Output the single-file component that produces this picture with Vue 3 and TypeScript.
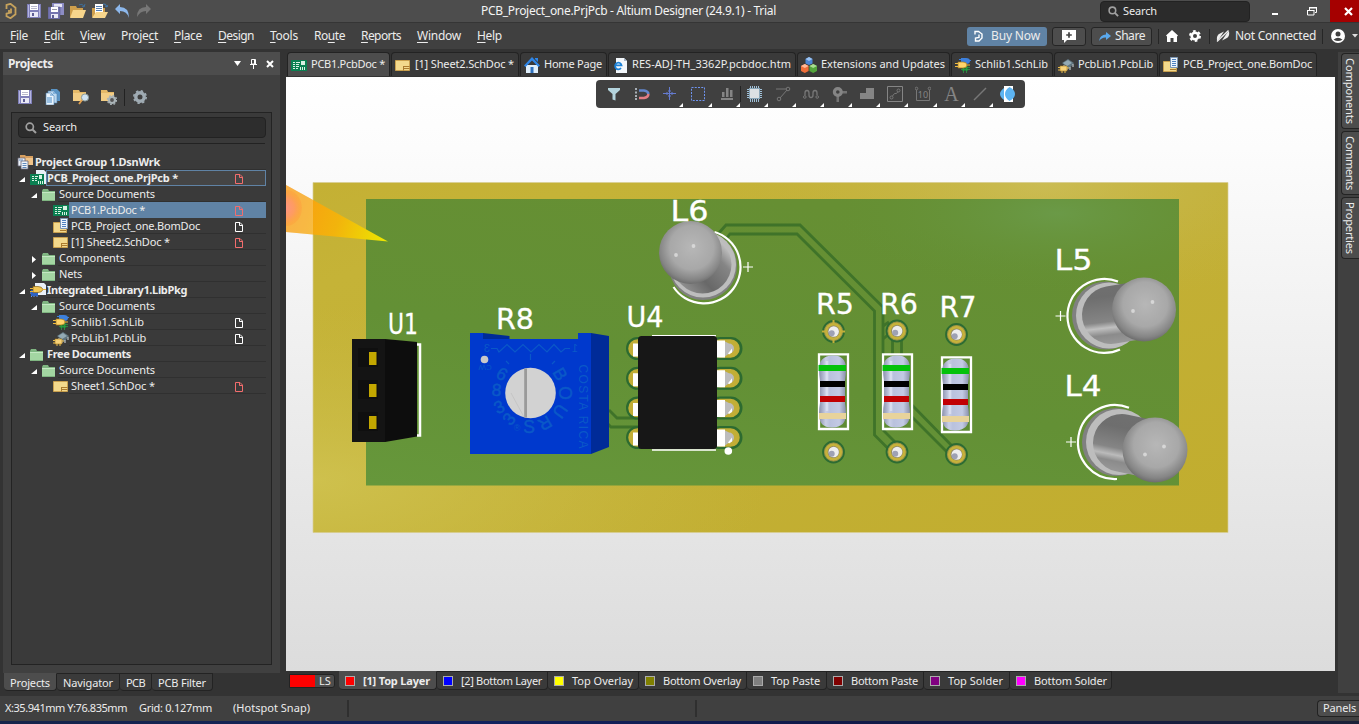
<script setup lang="ts">
import type { Directive } from 'vue'

// Spreads or tightens letter spacing so a label takes a given length in pixels.
const vFit: Directive<HTMLElement, number> = {
  mounted(el, { value }) {
    if (!value) return
    const box = el.getBoundingClientRect()
    const natural = Math.max(box.width, box.height)
    const count = (el.textContent ?? '').trim().length
    el.style.letterSpacing = `${(value - natural) / count}px`
  },
}

interface MenuItem { pre: string; key: string; post: string; w: number }
const menus: MenuItem[] = [
  { pre: '', key: 'F', post: 'ile', w: 18 },
  { pre: '', key: 'E', post: 'dit', w: 20 },
  { pre: '', key: 'V', post: 'iew', w: 25 },
  { pre: 'Proje', key: 'c', post: 't', w: 37 },
  { pre: '', key: 'P', post: 'lace', w: 28 },
  { pre: '', key: 'D', post: 'esign', w: 36 },
  { pre: '', key: 'T', post: 'ools', w: 28 },
  { pre: 'Ro', key: 'u', post: 'te', w: 31 },
  { pre: '', key: 'R', post: 'eports', w: 40 },
  { pre: '', key: 'W', post: 'indow', w: 44 },
  { pre: '', key: 'H', post: 'elp', w: 25 },
]

interface Row {
  label: string; level: number; icon: string; w: number
  open?: boolean; leaf?: boolean; bold?: boolean; mark?: 'red' | 'white'; state?: 'focus' | 'sel'
}
const rows: Row[] = [
  { label: 'Project Group 1.DsnWrk', level: 0, icon: 'group', w: 125, leaf: true, bold: true },
  { label: 'PCB_Project_one.PrjPcb *', level: 1, icon: 'prj', w: 131, open: true, bold: true, mark: 'red', state: 'focus' },
  { label: 'Source Documents', level: 2, icon: 'folder', w: 96, open: true },
  { label: 'PCB1.PcbDoc *', level: 3, icon: 'pcb', w: 74, leaf: true, mark: 'red', state: 'sel' },
  { label: 'PCB_Project_one.BomDoc', level: 3, icon: 'bom', w: 129, leaf: true, mark: 'white' },
  { label: '[1] Sheet2.SchDoc *', level: 3, icon: 'sch', w: 99, leaf: true, mark: 'red' },
  { label: 'Components', level: 2, icon: 'folder', w: 66 },
  { label: 'Nets', level: 2, icon: 'folder', w: 23 },
  { label: 'Integrated_Library1.LibPkg', level: 1, icon: 'libpkg', w: 140, open: true, bold: true },
  { label: 'Source Documents', level: 2, icon: 'folder', w: 96, open: true },
  { label: 'Schlib1.SchLib', level: 3, icon: 'schlib', w: 73, leaf: true, mark: 'white' },
  { label: 'PcbLib1.PcbLib', level: 3, icon: 'pcblib', w: 75, leaf: true, mark: 'white' },
  { label: 'Free Documents', level: 1, icon: 'folder', w: 84, open: true, bold: true },
  { label: 'Source Documents', level: 2, icon: 'folder', w: 96, open: true },
  { label: 'Sheet1.SchDoc *', level: 3, icon: 'sch', w: 84, leaf: true, mark: 'red' },
]

const docTabs = [
  { label: 'PCB1.PcbDoc *', icon: 'pcb', w: 74, tab: 103 },
  { label: '[1] Sheet2.SchDoc *', icon: 'sch', w: 99, tab: 128 },
  { label: 'Home Page', icon: 'home', w: 58, tab: 87 },
  { label: 'RES-ADJ-TH_3362P.pcbdoc.htm', icon: 'ie', w: 159, tab: 188 },
  { label: 'Extensions and Updates', icon: 'ext', w: 124, tab: 153 },
  { label: 'Schlib1.SchLib', icon: 'schlib', w: 73, tab: 102 },
  { label: 'PcbLib1.PcbLib', icon: 'pcblib', w: 75, tab: 104 },
  { label: 'PCB_Project_one.BomDoc', icon: 'bom', w: 129, tab: 158 },
]

const layers = [
  { label: '[1] Top Layer', color: '#ff0000', w: 67, tab: 98 },
  { label: '[2] Bottom Layer', color: '#0000ff', w: 81, tab: 111 },
  { label: 'Top Overlay', color: '#ffff00', w: 61, tab: 91 },
  { label: 'Bottom Overlay', color: '#808000', w: 78, tab: 108 },
  { label: 'Top Paste', color: '#808080', w: 49, tab: 80 },
  { label: 'Bottom Paste', color: '#800000', w: 67, tab: 97 },
  { label: 'Top Solder', color: '#800080', w: 55, tab: 86 },
  { label: 'Bottom Solder', color: '#ff00ff', w: 73, tab: 102 },
]

const panelTabs = [
  { label: 'Projects', w: 40, tab: 53 },
  { label: 'Navigator', w: 50, tab: 63 },
  { label: 'PCB', w: 19, tab: 32 },
  { label: 'PCB Filter', w: 48, tab: 61 },
]
const sideTabs = [
  { label: 'Components', w: 66, h: 76 },
  { label: 'Comments', w: 54, h: 64 },
  { label: 'Properties', w: 52, h: 62 },
]

const tools = ['filter', 'magnet', 'cross', 'select', 'align', 'chip', 'route', 'tune', 'via', 'poly', 'room', 'dim', 'text', 'line', 'view3d']

const pinRows = [348.5, 378.3, 408, 437.6]
const resistors = [{ x: 0, y: 0 }, { x: 64, y: 0 }, { x: 123, y: 3 }]
const pads = [
  { x: 833.5, y: 331.5 }, { x: 833.5, y: 452 }, { x: 897, y: 331 },
  { x: 897, y: 452 }, { x: 956.5, y: 334.5 }, { x: 956.5, y: 454.5 },
]
const designators = [
  { t: 'U1', x: 388, y: 333.5, w: 30 }, { t: 'R8', x: 496, y: 328.5, w: 38 },
  { t: 'U4', x: 626.5, y: 327, w: 37 }, { t: 'L6', x: 670.5, y: 221, w: 38 },
  { t: 'R5', x: 816, y: 313.5, w: 38 }, { t: 'R6', x: 880, y: 313.5, w: 38 },
  { t: 'R7', x: 939.5, y: 316.5, w: 37 }, { t: 'L5', x: 1054.5, y: 270, w: 38 },
  { t: 'L4', x: 1064.5, y: 396, w: 37 },
]
const ringLetters = [
  { t: '6', x: 502, y: 374, r: 30 }, { t: '8', x: 496.5, y: 390, r: 5 },
  { t: '3', x: 499, y: 407, r: -25 }, { t: '3', x: 509, y: 419, r: -50 },
  { t: 'S', x: 529, y: 427, r: 0 }, { t: 'R', x: 545, y: 423, r: 150 },
  { t: 'U', x: 560, y: 411, r: 125 }, { t: 'O', x: 564.5, y: 393, r: 90 },
  { t: 'B', x: 560, y: 374, r: 60 },
]
const leds = [
  { id: 'a', ring: 'M714.500 232A36.500 36.500 0 1 1 673.500 287', fx: 703, fy: 266, dx: 690.5, dy: 252.5, bx: 702.5, by: 264.5, r: 31.5, px: 748, py: 267, h: [[676, 255], [693.5, 246]] },
  { id: 'b', ring: 'M1118 281.500A37 37 0 1 0 1120 349.500', fx: 1106, fy: 315.5, dx: 1144, dy: 309.5, bx: 1111, by: 315, r: 32, px: 1060.5, py: 316, h: [[1133, 311], [1152.5, 302]] },
  { id: 'c', ring: 'M1129 407.800A37 37 0 1 0 1117 479', fx: 1116, fy: 442, dx: 1155, dy: 450, bx: 1122, by: 443, r: 32.5, px: 1071, py: 442, h: [[1145, 454.5], [1164, 446.5]] },
]
</script>

<template>
  <div class="app">
    <svg class="defs" width="0" height="0">
      <symbol id="i-save" viewBox="0 0 16 16"><path d="M1 1h14v14H1z" fill="#7f7fb8"/><path d="M2 2h1v12H2zM13 2h1v12h-1z" fill="#b5b5e0"/><path d="M4 1h8v6H4z" fill="#fff"/><path d="M5 3h6v1H5zM5 5h6v1H5z" fill="#b9b9cc"/><path d="M4 9h8v5H4z" fill="#e9e9f5"/><path d="M6 10h2v3H6z" fill="#5d5d94"/></symbol>
      <symbol id="i-saveall" viewBox="0 0 16 16"><path d="M4 0h12v12H4z" fill="#8c8cc4"/><path d="M6 1h8v3H6z" fill="#e4e4f4"/><path d="M0 4h12v12H0z" fill="#7474b0" stroke="#4c4c7c" stroke-width=".5"/><path d="M3 4h7v5H3z" fill="#fff"/><path d="M4 6h5v1H4z" fill="#99a"/><path d="M3 11h7v4H3z" fill="#e9e9f5"/><path d="M4 12h2v3H4z" fill="#5d5d94"/></symbol>
      <symbol id="i-open" viewBox="0 0 16 16"><path d="M0 3h6l1 2h6v9H0z" fill="#cf9f4c"/><path d="M3 7h13l-3 8H0z" fill="#f8d68c"/><path d="M9 2q4-2 5 2M12 3l2 1 1-3" fill="none" stroke="#3f6e99"/></symbol>
      <symbol id="i-opendoc" viewBox="0 0 16 16"><path d="M0 5h13v9H0z" fill="#cf9f4c"/><path d="M3 1h8v10H3z" fill="#fff"/><path d="M4 3.500h6M4 5.500h6M4 7.500h6" stroke="#5780b4"/><path d="M4 9h12l-3 6H0z" fill="#f8d68c"/><path d="M11 1q3-1 4 3M13 3l2 1 1-2" fill="none" stroke="#3f79b0"/></symbol>
      <symbol id="i-undo" viewBox="0 0 16 16"><path d="M1 6l5-5v3q9 0 9 11Q13 8 6 8v3z" fill="#8db8ec"/></symbol>
      <symbol id="i-redo" viewBox="0 0 16 16"><path d="M15 6l-5-5v3Q1 4 1 14q3-6 9-6v3z" fill="#777"/></symbol>
      <symbol id="i-logo" viewBox="0 0 12 16"><path d="M1.500 6V2l4-1.200 5 4v6.400l-5 4-4-2V10M1.500 10.500l4.500-1V5.500M4 7v3" fill="none" stroke="#c6a25c" stroke-width="1.800"/></symbol>
      <symbol id="i-copy" viewBox="0 0 16 16"><path d="M6 0h6l3 3v9H6z" fill="#5a94c4"/><path d="M3 2h6l3 3v9H3z" fill="#bcd8ef" stroke="#4a80b0" stroke-width=".6"/><path d="M1 4h5l3 3v9H1z" fill="#eaf4fc" stroke="#4a80b0" stroke-width=".6"/><path d="M2 9h5M2 11h5M2 13h5M5 6h3M8 4h3" stroke="#4a8cc8"/></symbol>
      <symbol id="i-fsearch" viewBox="0 0 16 16"><path d="M0 1h6l1 2h6v9H0z" fill="#e5b968"/><path d="M0 4h13v8H0z" fill="#f2cd85"/><circle cx="12" cy="8.500" r="3.600" fill="#cfe3f2" stroke="#899"/><path d="M9 11l-3 4" stroke="#e0a050" stroke-width="1.800"/></symbol>
      <symbol id="i-fgear" viewBox="0 0 16 16"><path d="M0 1h6l1 2h6v9H0z" fill="#e5b968"/><path d="M0 4h13v8H0z" fill="#f2cd85"/><circle cx="11" cy="11" r="3" fill="#555" stroke="#aab4b8" stroke-width="2.200"/><circle cx="11" cy="11" r="4.600" fill="none" stroke="#aab4b8" stroke-width="1.200" stroke-dasharray="1.800 1.800"/></symbol>
      <symbol id="i-gear" viewBox="0 0 16 16"><circle cx="8" cy="8" r="4.200" fill="none" stroke="#9fabb3" stroke-width="3.400"/><circle cx="8" cy="8" r="6.200" fill="none" stroke="#9fabb3" stroke-width="1.600" stroke-dasharray="2.400 2.470"/></symbol>
      <symbol id="i-search" viewBox="0 0 12 12"><circle cx="4.800" cy="4.800" r="3.600" fill="none" stroke="#a0a0a0" stroke-width="1.700"/><path d="M7.500 7.500l3.500 3.500" stroke="#a0a0a0" stroke-width="2"/></symbol>

      <symbol id="i-group" viewBox="0 0 16 16"><path d="M3 1h5l1 1h7v9H3z" fill="#d79f5f"/><path d="M4 4h12v7H4z" fill="#f0c48a"/><path d="M1 4h7v8H1z" fill="#eef4fb" stroke="#667" stroke-width=".8"/><path d="M4 7h7v8H4z" fill="#eef4fb" stroke="#667" stroke-width=".8"/><path d="M5.500 9.500h4M5.500 11.500h4M5.500 13.500h4M2 6h4" stroke="#5f89bb"/></symbol>
      <symbol id="i-pcb" viewBox="0 0 16 16"><path d="M0 3h16v11H0z" fill="#0b8052"/><path d="M2 5.500h2M2 7.500h2M2 9.500h2M2 11.500h2M5 5.500h4M5 7.500h3M5 9.500h3M5 11.500h2" stroke="#d9f2e4"/><path d="M10 4h4v4h-4z" fill="#d9f2e4"/><path d="M9.500 10v3M11.500 10v3M13.500 10v3" stroke="#d9f2e4"/></symbol>
      <symbol id="i-prj" viewBox="0 0 16 16"><path d="M6 0h8l2 2v12H6z" fill="#e9f0f8"/><path d="M0 4h14v11H0z" fill="#0b8052"/><path d="M2 6.500h2M2 8.500h2M2 10.500h2M5 6.500h3M5 8.500h2M5 10.500h2" stroke="#d9f2e4"/><path d="M9 5h3v4H9z" fill="#d9f2e4"/><path d="M8.500 11v3M10.500 11v3M12.500 11v3" stroke="#d9f2e4"/></symbol>
      <symbol id="i-folder" viewBox="0 0 16 16"><path d="M0 5l1-2h5l1 2h6v10H0z" fill="#7fb581"/><path d="M0 6h13v8H0z" fill="#a3d6a2"/><path d="M0 6h13v1H0z" fill="#c4e8c3"/></symbol>
      <symbol id="i-sch" viewBox="0 0 16 16"><path d="M.5 3.500h14v10H.5z" fill="#f3d98c" stroke="#c9a04e"/><path d="M8.500 9.500h6M8.500 11.500h6M8.500 9v4.500" stroke="#ab7b2e"/></symbol>
      <symbol id="i-bom" viewBox="0 0 16 16"><path d="M.5 4.500h13v10H.5z" fill="#f3d98c" stroke="#c9a04e"/><path d="M7.500.5h7v10h-7z" fill="#edf5fc" stroke="#7c96b4"/><path d="M9 2.500h4M9 4.500h4M9 6.500h4M9 8.500h4" stroke="#4f82c0"/><path d="M7 12.500h6" stroke="#ab7b2e"/></symbol>
      <symbol id="i-libpkg" viewBox="0 0 16 16"><path d="M5 1h9l2 2v10H5z" fill="#e9f0f8"/><path d="M1 8h7v6H1z" fill="#2d63c4"/><path d="M1 15l1-1M4 15v-1M7 15v-1M0 11h1" stroke="#6f9df0"/><path d="M3 4.500h5q4 0 5 3-1 3-5 3H3z" fill="#f2c654" stroke="#8a6414" stroke-width=".7"/><path d="M0 6.500h3M0 9.500h3M13 7.500h3" stroke="#e9b53b"/></symbol>
      <symbol id="i-schlib" viewBox="0 0 16 16"><path d="M6 1h5q4 0 4 3t-4 3H6z" fill="#3d80dc"/><path d="M4 2.500h3M14 3.500h2" stroke="#3d80dc"/><path d="M7 9h6v5H7z" fill="#1b7a34"/><path d="M6 10.500h9M6 12.500h9M8.500 8v8M11.500 8v8" stroke="#2e9a45" stroke-width=".8"/><path d="M3 5h5q4 0 4 3t-4 3H3z" fill="#ffd56a" stroke="#a87818" stroke-width=".7"/><path d="M0 6.500h3M0 9.500h3M12 8h3" stroke="#f0bb3e"/></symbol>
      <symbol id="i-pcblib" viewBox="0 0 16 16"><path d="M4 6l6-4 6 4-5 6z" fill="#60747e"/><path d="M5 6l5-3 4 3-5 3z" fill="#93a9b4"/><path d="M6 8v3M9 10v3M12 10v3M15 7v3" stroke="#d5dee2"/><path d="M2 9h7v5H2z" fill="#f7d27a" stroke="#a87818" stroke-width=".6"/><path d="M0 10.500h2M0 13h2M4 14v2M7 14v2M9 11h2" stroke="#e8bb4b"/></symbol>
      <symbol id="i-home" viewBox="0 0 16 16"><path d="M2 8h12v8H2z" fill="#dfeffc"/><path d="M0 8.500L8 0l8 8.500-1.500 1.500L8 3.500 1.500 10z" fill="#2e86e8"/><path d="M11 1h3v4l-3-3z" fill="#2e86e8"/><path d="M6.500 10h3v6h-3z" fill="#2f72c0"/></symbol>
      <symbol id="i-ie" viewBox="0 0 16 16"><path d="M4 1h8l3 3v12H4z" fill="#f3f7fb"/><path d="M12 1l3 3h-3z" fill="#a5b7ca"/><path d="M9 11a3.300 3.300 0 1 1 .6-2.600H4" fill="none" stroke="#1c82d8" stroke-width="1.700"/></symbol>
      <symbol id="i-ext" viewBox="0 0 16 16"><path d="M4.500 2L8 0l3.500 2v4.500L8 8 4.500 6.500z" fill="#4b86d4"/><path d="M4.500 2L8 4l3.500-2L8 0z" fill="#9cc4f2"/><path d="M0 9l3.800-2L7.600 9v5l-3.800 2L0 14z" fill="#ef6f3a"/><path d="M0 9l3.800 2L7.600 9 3.800 7z" fill="#ffb998"/><path d="M8.400 9l3.800-2L16 9v5l-3.800 2-3.800-2z" fill="#53a53c"/><path d="M8.400 9l3.800 2L16 9l-3.800-2z" fill="#a9dd92"/></symbol>

      <symbol id="t-filter" viewBox="0 0 16 16"><path d="M2 2h12v2l-4.500 4v6.500l-3-1V8L2 4z" fill="#b4d4de"/></symbol>
      <symbol id="t-magnet" viewBox="0 0 16 16"><path d="M1 2h2v2H1zM1 5.500h2v2H1zM1 9h2v2H1zM1 12h2v2H1z" fill="#a7aeb4"/><path d="M5 4.500h5q4 .5 4.500 3.500" fill="none" stroke="#6286cc" stroke-width="2.500"/><path d="M5 12h5q4-.5 4.500-4" fill="none" stroke="#e27d83" stroke-width="2.500"/></symbol>
      <symbol id="t-cross" viewBox="0 0 16 16"><path d="M1 7.500h13M7.500 1v13M5 6v3M10 6v3M6 5h3M6 10h3" stroke="#647bd0"/></symbol>
      <symbol id="t-select" viewBox="0 0 16 16"><path d="M1.500 1.500h13v13h-13z" fill="none" stroke="#6f94f0" stroke-dasharray="2 1.250"/></symbol>
      <symbol id="t-align" viewBox="0 0 16 16"><path d="M2 13h12" stroke="#858585" stroke-width="2"/><path d="M3 6h2.500v5H3zM7 2h2.500v9H7zM11 4h2.500v7H11z" fill="#858585"/></symbol>
      <symbol id="t-chip" viewBox="0 0 16 16"><path d="M3.500 0v16M5.500 0v16M7.500 0v16M9.500 0v16M11.500 0v16M0 3.500h15M0 5.500h15M0 7.500h15M0 9.500h15M0 11.500h15" stroke="#9fc0d8"/><path d="M2 2h11v11H2z" fill="#8aa6b8"/><path d="M3 3h9v9H3z" fill="#dce1e4"/></symbol>
      <symbol id="t-route" viewBox="0 0 16 16"><path d="M1 3h10M12 4l-7 8" stroke="#777"/><circle cx="13" cy="3" r="1.800" fill="none" stroke="#777"/><circle cx="4" cy="13" r="1.800" fill="none" stroke="#777"/></symbol>
      <symbol id="t-tune" viewBox="0 0 16 16"><circle cx="1.800" cy="11" r="1.300" fill="none" stroke="#777"/><path d="M2 9.500V7q0-2.500 2-2.500T6 7v2q0 2.500 2 2.500T10 9V7q0-2.500 2-2.500T14 7v2" fill="none" stroke="#777" stroke-width="1.300"/><circle cx="14.200" cy="11" r="1.300" fill="none" stroke="#777"/></symbol>
      <symbol id="t-via" viewBox="0 0 16 16"><path d="M9 5h7v2.500H9zM5.500 9H8v7H5.500z" fill="#747474"/><circle cx="6.800" cy="6" r="3.400" fill="#404040" stroke="#858585" stroke-width="3.200"/></symbol>
      <symbol id="t-poly" viewBox="0 0 16 16"><path d="M1 7h6V2h8v11H1z" fill="#858585"/></symbol>
      <symbol id="t-room" viewBox="0 0 16 16"><path d="M.5.5h15v15H.5z" fill="none" stroke="#858585"/><circle cx="4.500" cy="11.500" r="1.500" fill="none" stroke="#777"/><circle cx="11.500" cy="4.500" r="1.500" fill="none" stroke="#777"/><path d="M5.500 10l2-2.500h2l1.500-2" fill="none" stroke="#777"/></symbol>
      <symbol id="t-dim" viewBox="0 0 16 16"><path d="M1.500 4v10.500h13V4" fill="none" stroke="#777"/><circle cx="1.500" cy="2.500" r="1.300" fill="none" stroke="#777"/><circle cx="14.500" cy="2.500" r="1.300" fill="none" stroke="#777"/></symbol>
      <symbol id="t-line" viewBox="0 0 16 16"><path d="M2 14L14 2" stroke="#777" stroke-width="1.500"/></symbol>
      <symbol id="t-view3d" viewBox="0 0 16 16"><path d="M4 0h9v16H4z" fill="#fff"/><path d="M4 2v12Q0 11 0 8t4-6M9.500 1Q15 4 15 8t-5.500 7Q5 12 5 8t4.500-7" fill="#5db4f2"/></symbol>
    </svg>

    <header class="titlebar">
      <svg class="logo" width="12" height="16"><use href="#i-logo"/></svg>
      <svg v-for="n in ['save', 'saveall', 'open', 'opendoc', 'undo', 'redo']" :key="n" class="qa" width="16" height="16"><use :href="`#i-${n}`"/></svg>
      <div class="title"><span v-fit="295">PCB_Project_one.PrjPcb - Altium Designer (24.9.1) - Trial</span></div>
      <div class="tsearch"><svg width="11" height="11"><use href="#i-search"/></svg><span v-fit="34">Search</span></div>
      <div class="winbtns">
        <span class="min"></span>
        <svg class="restore" width="10" height="9" viewBox="0 0 10 9"><path d="M2.500 3V.5h7v5H8M.5 3.500h6.500V8H.5z" fill="none" stroke="#fff"/><path d="M0 3h7.500v1H0zM2 0h8v1.500H2z" fill="#fff"/></svg>
        <div class="close"><svg width="9" height="9" viewBox="0 0 9 9"><path d="M1 1l7 7M8 1l-7 7" stroke="#fff" stroke-width="2.200"/></svg></div>
      </div>
    </header>

    <nav class="menubar">
      <span v-for="m in menus" :key="m.key + m.post" v-fit="m.w" class="menu">{{ m.pre }}<u>{{ m.key }}</u>{{ m.post }}</span>
      <div class="actions">
        <div class="buy"><svg width="9" height="12" viewBox="0 0 9 12"><path d="M1 4.500V1.500h3.500L8 4v4L5 11H1.500V8L5 7.500V4.500" fill="none" stroke="#fff" stroke-width="1.400"/></svg><span v-fit="49">Buy Now</span></div>
        <div class="btn note"><svg width="16" height="13" viewBox="0 0 16 13"><path d="M1 0h14v10H6l-3 3v-3H1z" fill="#fff"/><path d="M8 2.200v5.600M5.200 5h5.600" stroke="#444" stroke-width="1.700"/></svg></div>
        <div class="btn share"><svg width="12" height="9" viewBox="0 0 12 9"><path d="M7 0l5 4-5 4V5.500Q3 5 0 9q1-6.500 7-6.500z" fill="#5aa9ee"/></svg><span v-fit="30">Share</span></div>
        <i class="vsep"></i>
        <svg class="house" width="12" height="12" viewBox="0 0 12 12"><path d="M6 0l6 5.500-1 1V12H7.500V8h-3v4H1V6.500l-1-1z" fill="#fff"/></svg>
        <svg class="cog" width="12" height="12" viewBox="0 0 12 12"><circle cx="6" cy="6" r="3.300" fill="none" stroke="#fff" stroke-width="2.600"/><circle cx="6" cy="6" r="5" fill="none" stroke="#fff" stroke-width="2" stroke-dasharray="2.600 2.640"/></svg>
        <i class="vsep"></i>
        <svg class="plug" width="14" height="12" viewBox="0 0 14 12"><path d="M1 11Q0 5 4 3.500L8 1.500 3 9zM13 1q1 6-3 7.500L6 10.500 11 3z" fill="#eee"/><path d="M1 11.500L12.500.5" stroke="#eee" stroke-width="1.300"/></svg>
        <span v-fit="81" class="nc">Not Connected</span>
        <i class="vsep"></i>
        <svg class="user" width="14" height="14" viewBox="0 0 14 14"><circle cx="7" cy="7" r="7" fill="#fff"/><circle cx="7" cy="5" r="2.500" fill="#404040"/><path d="M2.500 10.800Q7 6.500 11.500 10.800 9 12 7 12T2.500 10.800" fill="#404040"/></svg>
        <svg class="caret" width="7" height="4" viewBox="0 0 7 4"><path d="M1 0h6L4 3.500z" fill="#ddd"/></svg>
      </div>
    </nav>

    <main class="work">
      <aside class="left">
        <div class="phead">
          <span v-fit="45" class="pname">Projects</span>
          <svg width="7" height="5" viewBox="0 0 7 5"><path d="M0 0h7L3.500 5z" fill="#fff"/></svg>
          <svg width="7" height="10" viewBox="0 0 7 10"><path d="M1.500.5h4V5h-4zM4.500 0v5M0 5.500h7M3.500 6v4" fill="none" stroke="#fff"/></svg>
          <svg width="8" height="8" viewBox="0 0 8 8"><path d="M1 1l6 6M7 1L1 7" stroke="#fff" stroke-width="2"/></svg>
        </div>
        <div class="pbody">
          <div class="ptools">
            <svg v-for="n in ['save', 'copy', 'fsearch', 'fgear']" :key="n" width="16" height="16"><use :href="`#i-${n}`"/></svg>
            <i></i>
            <svg width="16" height="16"><use href="#i-gear"/></svg>
          </div>
          <div class="treebox">
            <div class="psearch"><svg width="12" height="12"><use href="#i-search"/></svg><span v-fit="34">Search</span></div>
            <hr>
            <div class="tree">
              <div v-for="(r, i) in rows" :key="i" class="row" :class="[`lv${r.level}`, r.state, { bold: r.bold }]">
                <svg class="tw" width="6" height="7" viewBox="0 0 6 7"><path v-if="r.open" d="M6 1v5H0z" fill="#fff"/><path v-else-if="!r.leaf" d="M1 0l4 3.500L1 7z" fill="#fff"/></svg>
                <svg class="ico" width="16" height="16"><use :href="`#i-${r.icon}`"/></svg>
                <div class="cell">
                  <span v-fit="r.w">{{ r.label }}</span>
                  <svg v-if="r.mark" class="mark" :class="r.mark" width="8" height="10" viewBox="0 0 8 10"><path d="M.5.5H5L7.500 3v6.500h-7zM4.500.5v3h3" fill="none" stroke="currentColor"/></svg>
                </div>
              </div>
            </div>
          </div>
        </div>
        <div class="ptabs"><div v-for="(t, i) in panelTabs" :key="t.label" class="ptab" :class="{ on: i === 0 }" :style="{ width: t.tab + 'px' }"><span v-fit="t.w">{{ t.label }}</span></div></div>
      </aside>

      <section class="center">
        <div class="dtabs">
          <div v-for="(t, i) in docTabs" :key="t.label" class="dtab" :class="{ on: i === 0 }" :style="{ width: t.tab + 'px' }">
            <svg width="16" height="16"><use :href="`#i-${t.icon}`"/></svg><span v-fit="t.w">{{ t.label }}</span>
          </div>
        </div>
        <div class="canvas">
          <svg class="board" width="1049" height="594" viewBox="286 77 1049 594">
            <defs>
              <linearGradient id="gold" x1="0" y1="0" x2="1" y2="1"><stop offset="0" stop-color="#c4b034"/><stop offset=".15" stop-color="#c5b337"/><stop offset=".5" stop-color="#c3b036"/><stop offset="1" stop-color="#c1ad2e"/></linearGradient>
              <radialGradient id="goldl" cx="0" cy=".85" r=".5"><stop offset="0" stop-color="#d2c655" stop-opacity=".75"/><stop offset="1" stop-color="#cbbd45" stop-opacity="0"/></radialGradient>
              <radialGradient id="goldr" cx=".8" cy="0" r=".35"><stop offset="0" stop-color="#d0c56b" stop-opacity=".55"/><stop offset="1" stop-color="#c4b54a" stop-opacity="0"/></radialGradient>
              <radialGradient id="greenl" cx=".85" cy=".05" r=".28"><stop offset="0" stop-color="#6c9d4e" stop-opacity=".75"/><stop offset="1" stop-color="#649133" stop-opacity="0"/></radialGradient>
              <linearGradient id="green" x1="0" y1="1" x2=".5" y2="0"><stop offset="0" stop-color="#66973b"/><stop offset=".5" stop-color="#639035"/><stop offset="1" stop-color="#668f33"/></linearGradient>
              <linearGradient id="flare" gradientUnits="userSpaceOnUse" x1="286" y1="210" x2="388" y2="241"><stop offset="0" stop-color="#f99b12"/><stop offset=".5" stop-color="#f2b40c"/><stop offset="1" stop-color="#ece800"/></linearGradient>
              <radialGradient id="glow" gradientUnits="userSpaceOnUse" cx="284" cy="208" r="17"><stop offset="0" stop-color="#ff9488"/><stop offset=".6" stop-color="#ff9668" stop-opacity=".8"/><stop offset="1" stop-color="#ff9a3c" stop-opacity=".4"/></radialGradient>
              <radialGradient id="dome" cx=".52" cy=".42" r=".58"><stop offset="0" stop-color="#b7b7b7"/><stop offset=".6" stop-color="#a8a8a8"/><stop offset=".88" stop-color="#858585"/><stop offset="1" stop-color="#6d6d6d"/></radialGradient>
              <linearGradient id="cyl-a" gradientUnits="userSpaceOnUse" x1="673" y1="285" x2="727" y2="235"><stop offset="0" stop-color="#9a9a9a"/><stop offset=".35" stop-color="#686868"/><stop offset=".7" stop-color="#858585"/><stop offset=".88" stop-color="#c0c0c0"/><stop offset="1" stop-color="#888"/></linearGradient>
              <linearGradient id="cyl-b" gradientUnits="userSpaceOnUse" x1="1108" y1="284" x2="1115" y2="344"><stop offset="0" stop-color="#707070"/><stop offset=".2" stop-color="#6e6e6e"/><stop offset=".62" stop-color="#858585"/><stop offset=".72" stop-color="#c0c0c0"/><stop offset=".84" stop-color="#8b8b8b"/><stop offset="1" stop-color="#999"/></linearGradient>
              <linearGradient id="cyl-c" gradientUnits="userSpaceOnUse" x1="1126" y1="413" x2="1114" y2="472"><stop offset="0" stop-color="#707070"/><stop offset=".25" stop-color="#6e6e6e"/><stop offset=".6" stop-color="#858585"/><stop offset=".72" stop-color="#bbb"/><stop offset=".82" stop-color="#8b8b8b"/><stop offset="1" stop-color="#999"/></linearGradient>
              <linearGradient id="res" x1="0" y1="0" x2="1" y2="0"><stop offset="0" stop-color="#8a90ab"/><stop offset=".25" stop-color="#c9cfe6"/><stop offset=".4" stop-color="#b9c1dd"/><stop offset=".75" stop-color="#c3cae4"/><stop offset="1" stop-color="#8a90ab"/></linearGradient>
            </defs>
            <path d="M313 182.500h915v350H313z" fill="url(#gold)"/>
            <path d="M313 182.500h915v350H313z" fill="url(#goldl)"/>
            <path d="M313 182.500h915v350H313z" fill="url(#goldr)"/>
            <path d="M366 199h813v286.500H366z" fill="url(#green)"/>
            <path d="M366 199h813v286.500H366z" fill="url(#greenl)"/>
            <path d="M313 182.500h915v350H313z" fill="none" stroke="#d8cf95" stroke-width=".7"/>
            <path d="M286 185l102 56.500L286 232z" fill="url(#flare)"/>
            <path d="M286 185l27 15v34.500l-27-2.500z" fill="#fff" opacity=".22"/>
            <path d="M286 190a15 17 0 0 1 0 36z" fill="url(#glow)"/>

            <g fill="none" stroke="#3f7329" stroke-width="2.800">
              <path d="M718 234l8-9h74l83 82v123l15 15"/>
              <path d="M726 239l4-5h67l77.500 77v124l15 15"/>
              <path d="M892.500 340v16M901.500 340v16M883 326l6-4M883 339l6-5M911 404l44 45M911 416l36 36"/>
              <path d="M609 410l8 8h22M607 423l4 4h28"/>
            </g>

            <g>
              <path d="M417 344.500h3v91h-3" fill="none" stroke="#fff" stroke-width="2.500"/>
              <path d="M352 339h33v103h-33z" fill="#141414"/>
              <path d="M385 339l32 3v94.500l-32 5.500z" fill="#0d0d0d"/>
              <g v-for="y in [0, 32, 64]" :key="y"><path :transform="`translate(0 ${y})`" d="M358 348h20v19h-20z" fill="#0f0f0f"/><path :transform="`translate(0 ${y})`" d="M369 352h7.500v13H369z" fill="#c3a700"/></g>
            </g>

            <g>
              <path d="M470 333h13v6h95v-6h13v121H470z" fill="#0039cd"/>
              <path d="M483 333l26.500 3v3H483zM591 333l18 3v111l-18 7z" fill="#002b98"/>
              <g fill="none" stroke="#0a58c8" stroke-width="1.200"><path d="M491 348.500h6l2 3.500 8-7.500 8 7.500 8-7.500 8 7.500 8-7.500 8 7.500 7-7.500 7 7.500 4-3.500h5M530.500 354v6M506 361l3 3M555 361l-3 3"/></g>
              <g class="molded">
                <text transform="translate(486 352) scale(-1 1)" x="-4" font-size="11">3</text>
                <text transform="translate(574 352) scale(-1 1)" x="-4" font-size="11">1</text>
                <text transform="translate(485 368) rotate(180)" text-anchor="middle" y="3" font-size="8">CW</text>
                <text v-for="(l, i) in ringLetters" :key="i" class="ringtext" :transform="`translate(${l.x} ${l.y}) rotate(${l.r})`" y="6" text-anchor="middle" font-size="17.500">{{ l.t }}</text>
                <text x="517" y="431" text-anchor="middle" font-size="9">®</text>
                <text transform="translate(579 364.500) rotate(90)" font-size="12" textLength="84">COSTA RICA</text>
              </g>
              <circle cx="530.500" cy="393" r="25.300" fill="#d2d2d2"/>
              <path d="M524.200 368.500h2.800v49h-2.800z" fill="#9a9a9a"/><path d="M511 393l13 24" stroke="#bcbcbc" stroke-width=".6"/>
              <circle cx="484.500" cy="359.500" r="3.800" fill="#c9c9c9"/>
            </g>

            <g>
              <g v-for="y in pinRows" :key="y">
                <path :d="`M640 ${y}H637.500M720 ${y}H731`" stroke="#2d6b30" stroke-width="23" stroke-linecap="round"/>
                <path :d="`M640 ${y}H637.500M720 ${y}H730.500`" stroke="#c2ae36" stroke-width="18.500" stroke-linecap="round"/>
                <path :d="`M633 ${y - 5}h5v13h-5zM717 ${y - 8}h8v17h-8z`" fill="#fff"/>
                <path :d="`M725 ${y - 7}l4 2a5 5 0 0 1 0 10l-4 3z`" fill="#bcbcbc"/>
                <path :d="`M728 ${y + 5}l4-5v4l-3 2z`" fill="#fff"/>
              </g>
              <path d="M652 335.700h64M652 450h64" stroke="#fff" stroke-width="1.500"/>
              <rect x="638" y="336" width="79" height="113" rx="3.500" fill="#171717"/>
              <circle cx="728.300" cy="451" r="3.800" fill="#fff"/>
            </g>

            <g v-for="p in pads" :key="`${p.x}-${p.y}`" :transform="`translate(${p.x} ${p.y})`">
              <circle r="10.500" fill="#6b8f3a" stroke="#2d6b33" stroke-width="1.800"/>
              <circle r="9" fill="#c6b23a" stroke="#a08d4c" stroke-width=".7"/>
              <circle r="5.900" fill="#8e8768"/><circle cx=".2" r="5.200" fill="#eee"/><circle cx="-1.800" cy="1.800" r="3" fill="#9ea1b4"/>
            </g>
            <path d="M822 331.500h4M841 331.500h4M833.500 320v4M833.500 339v4" stroke="#c3b03a" stroke-width="2"/>

            <g v-for="r in resistors" :key="r.x" :transform="`translate(${r.x} ${r.y})`">
              <path d="M819 354.300h29v74.700h-29z" fill="#5f8c34" stroke="#fff" stroke-width="2.300"/>
              <path d="M819 369q0-13 13.500-13.500T846 369q0 5-1 12v22q1 5 1 11 0 13-13.500 13.500T819 414q0-6 1-11v-22q-1-7-1-12z" fill="url(#res)"/>
              <path d="M827 361v50" stroke="#e1e5f4" stroke-width="2.500" opacity=".7"/>
              <path d="M818.500 365h27.500v6h-27.500z" fill="#04c20b"/><path d="M820 381h25v6h-25z" fill="#000"/><path d="M820 396h25v6h-25z" fill="#c10003"/><path d="M819 413h27v6h-27z" fill="#e8d39b"/>
            </g>

            <g v-for="l in leds" :key="l.id">
              <path :d="l.ring" fill="none" stroke="#fff" stroke-width="2.200"/>
              <circle :cx="l.fx" :cy="l.fy" r="34" fill="#808080"/>
              <circle :cx="l.fx + (l.id === 'a' ? 0 : 3)" :cy="l.fy - (l.id === 'a' ? 1.5 : 0)" r="33" fill="#bdbdbd"/>
              <path :d="`M${l.bx} ${l.by}L${l.dx} ${l.dy}`" :stroke="`url(#cyl-${l.id})`" stroke-width="58" stroke-linecap="round"/>
              <circle :cx="l.dx" :cy="l.dy" :r="l.r" fill="url(#dome)"/>
              <circle v-for="(h, k) in l.h" :key="k" :cx="h[0]" :cy="h[1]" r="1.900" fill="#e0e0e0" opacity=".8"/>
              <path :d="`M${l.px - 5} ${l.py}h10M${l.px} ${l.py - 5}v10`" stroke="#fff" stroke-width="1.200"/>
            </g>

            <text v-for="d in designators" :key="d.t" class="desig" :x="d.x" :y="d.y" :textLength="d.w" lengthAdjust="spacingAndGlyphs">{{ d.t }}</text>
          </svg>
          <div class="toolbar">
            <div v-for="(n, i) in tools" :key="n" class="tool" :class="{ more: i > 1 && i < 14, div: i === 5 }">
              <span v-if="n === 'text'" class="serif">A</span>
              <svg v-else width="16" height="16"><use :href="`#t-${n}`"/><text v-if="n === 'dim'" class="ten" x="8" y="11.500" text-anchor="middle">10</text></svg>
            </div>
          </div>
        </div>
        <div class="layers">
          <div class="ls"><i></i><span>LS</span></div>
          <div v-for="(l, i) in layers" :key="l.label" class="layer" :class="{ on: i === 0 }" :style="{ width: l.tab + 'px' }"><i :style="{ background: l.color }"></i><span v-fit="l.w">{{ l.label }}</span></div>
        </div>
      </section>

      <aside class="right"><div v-for="t in sideTabs" :key="t.label" class="stab" :style="{ height: t.h + 'px' }"><span v-fit="t.w">{{ t.label }}</span></div></aside>
    </main>

    <footer class="status">
      <span v-fit="122" class="s1">X:35.941mm Y:76.835mm</span><span v-fit="73" class="s2">Grid: 0.127mm</span><span v-fit="77" class="s3">(Hotspot Snap)</span>
      <i class="a"></i><i class="b"></i><div class="panels"><span v-fit="33">Panels</span></div>
    </footer>
    <div class="desktop"></div>
  </div>
</template>

<style>
body { margin: 0; overflow: hidden; background: #333; }
</style>

<style scoped>
.app { width: 1359px; height: 724px; display: flex; flex-direction: column; background: #333; color: #ececec; font: 11px/16px "Noto Sans", "Open Sans", sans-serif; overflow: hidden; }
.app * { box-sizing: border-box; }
.app span { display: inline-block; white-space: pre; }
svg { display: block; flex: none; }
.defs { position: absolute; }
.titlebar { height: 23px; background: #4d4d4d; border-bottom: 1px solid #353535; display: flex; align-items: center; flex: none; }
.logo { margin-left: 5px; margin-right: 3px; }
.qa { margin-left: 6px; }
.title { margin-left: 329px; width: 295px; font-size: 12px; color: #f4f4f4; }
.tsearch { margin-left: 324px; width: 150px; height: 21px; background: #2b2b2b; border: 1px solid #222; border-radius: 4px; display: flex; align-items: center; padding-left: 7px; gap: 4px; }
.tsearch span { margin-top: -1px; }
.winbtns { display: flex; flex: 1; align-self: stretch; align-items: center; }
.min { width: 6px; height: 2px; background: #fff; margin: 6px 0 0 22px; }
.restore { margin-left: 29px; }
.close { margin-left: auto; width: 29px; height: 22px; background: #a50000; display: flex; align-items: center; padding-left: 14px; }
.menubar { height: 26px; background: #404040; display: flex; align-items: center; padding-left: 10px; flex: none; font-size: 12px; }
.menu { margin-right: 16px; }
.menu u { text-underline-offset: 2px; text-decoration-thickness: 1px; }
.actions { display: flex; align-items: center; margin-left: auto; width: 392px; }
.buy { width: 80px; height: 19px; background: #6083a5; border-radius: 3px; display: flex; align-items: center; padding-left: 7px; gap: 8px; }
.btn { height: 19px; border: 1px solid #252525; border-radius: 3px; background: #4d4d4d; display: flex; align-items: center; }
.note { width: 34px; margin-left: 5px; padding-left: 8px; }
.share { width: 61px; margin-left: 5px; padding-left: 7px; gap: 4px; }
.vsep { width: 1px; height: 15px; background: #262626; }
.share + .vsep { margin-left: 6px; }
.house { margin-left: 7px; }
.cog { margin-left: 11px; margin-right: 8px; }
.plug { margin-left: 6px; margin-right: 5px; }
.nc { margin-right: 6px; }
.user { margin-left: 8px; }
.caret { margin-left: 6px; }
.work { flex: 1; display: flex; min-height: 0; padding-top: 3px; }
.left { width: 277px; margin-left: 3px; display: flex; flex-direction: column; }
.phead { height: 23px; background: #4d4d4d; display: flex; align-items: center; padding: 0 6px 0 5px; gap: 9px; flex: none; }
.pname { font-weight: 700; font-size: 12px; margin-right: auto; }
.pbody { height: 598px; background: #404040; padding: 14px 8px 0; }
.ptools { height: 16px; margin: 0 0 7px 6px; display: flex; gap: 12px; }
.ptools i { width: 1px; height: 17px; background: #222; margin: 0 -5px; }
.treebox { height: 553px; border: 1px solid #232323; background: #3a3a3a; padding-top: 4px; }
.psearch { width: 248px; height: 21px; margin-left: 6px; border: 1px solid #222; border-radius: 4px; background: #2d2d2d; display: flex; align-items: center; padding-left: 6px; gap: 6px; }
.psearch span { margin-top: -2px; }
hr { margin: 5px 6px 10px; border: 0; height: 1px; background: #222; }
.tree { width: 254px; }
.row { height: 16px; display: flex; align-items: center; }
.lv1 { padding-left: 7px; } .lv2 { padding-left: 19px; } .lv3 { padding-left: 31px; }
.tw { margin-top: 2px; }
.lv0 .tw { width: 0; }
.ico { margin-left: 5px; }
.lv3 .ico { margin-left: 4px; }
.cell { flex: 1; height: 16px; display: flex; align-items: center; padding-left: 1px; border-bottom: 1px solid #303030; }
.lv3 .cell { padding-left: 2px; }
.lv0 .cell { padding-left: 2px; }
.cell span { line-height: 14px; }
.bold { font-weight: 700; }
.focus .cell { border: 1px solid #6083a5; background: #454545; padding-left: 0; }
.sel .cell { background: #6083a5; border: 0; }
.mark { margin-left: auto; margin-right: 23px; margin-top: 2px; color: #fff; }
.focus .mark { margin-right: 22px; }
.red { color: #f26d6d; }
.ptabs { display: flex; height: 19px; padding-left: 1px; background: #333; }
.ptab { height: 18px; background: #3a3a3a; border: 1px solid #232323; border-left-width: 0; border-radius: 0 0 4px 4px; padding-left: 6px; }
.ptab.on { background: #4d4d4d; border-top-color: #4d4d4d; }
.ptab span { line-height: 18px; }
.center { width: 1049px; margin-left: 6px; display: flex; flex-direction: column; }
.dtabs { height: 25px; display: flex; padding-left: 1px; gap: 1px; }
.dtab { height: 24px; display: flex; align-items: center; padding-left: 3px; gap: 4px; background: #3a3a3a; border: 1px solid #232323; border-bottom: 0; border-radius: 4px 4px 0 0; flex: none; }
.dtab span { margin-top: -2px; }
.dtab.on { background: #4d4d4d; }
.canvas { height: 594px; position: relative; background: linear-gradient(#fff, #fcfcfc 12%, #dcdcdc); }
.board { position: absolute; left: 0; top: 0; }
.desig { font: 27.500px "DejaVu Sans", sans-serif; fill: #fff; stroke: #fff; stroke-width: .3px; }
.molded { fill: #0a58c8; font-family: "Liberation Sans", sans-serif; }
.ringtext { stroke: #0a58c8; stroke-width: .5px; }
.toolbar { position: absolute; left: 310px; top: 3px; width: 429px; height: 28px; background: #404040; border-radius: 4px; display: flex; padding-left: 4px; }
.tool { width: 28.140px; display: flex; align-items: center; justify-content: center; position: relative; flex: none; }
.serif { font: 20px/20px "Liberation Serif", serif; color: #858585; }
.ten { font: 9px "Noto Sans", sans-serif; fill: #858585; }
.more::after { content: ""; position: absolute; right: 1px; bottom: 1px; border: 2.500px solid #fff; border-left-color: transparent; border-top-color: transparent; }
.div::before { content: ""; position: absolute; left: -1px; top: 6px; width: 1px; height: 16px; background: #222; }
.layers { display: flex; height: 20px; padding-left: 3px; }
.ls { display: flex; width: 46px; height: 14px; margin: 3px 4px 0 0; border: 1px solid #232323; background: #4d4d4d; border-radius: 0 3px 3px 0; }
.ls i { width: 25px; background: #f00; margin-right: 4px; }
.ls span { line-height: 12px; }
.layer { height: 19px; display: flex; align-items: center; background: #3a3a3a; border: 1px solid #232323; border-left-width: 0; border-radius: 0 0 4px 4px; padding-left: 6px; flex: none; }
.layer i { width: 10px; height: 10px; border: 1px solid #aaa; margin-right: 8px; }
.layer.on { background: #4d4d4d; font-weight: 700; border-top-color: #4d4d4d; }
.right { width: 21px; margin-left: 3px; background: #404040; height: 641px; padding: 1px 0 0 3px; display: flex; flex-direction: column; gap: 2px; }
.stab { border: 1px solid #232323; border-right: 0; border-radius: 4px 0 0 4px; background: #4d4d4d; writing-mode: vertical-rl; padding-top: 4px; flex: none; }
.stab span { line-height: 17px; }
.status { height: 25px; background: #404040; display: flex; align-items: center; padding-left: 5px; flex: none; }
.status i { width: 2px; height: 17px; background: #2f2f2f; }
.status span { margin-top: -1px; }
.s2 { margin-left: 12px; } .s3 { margin-left: 21px; }
.status .a { margin-left: 37px; } .status .b { margin-left: 346px; }
.panels { margin-left: auto; width: 42px; height: 17px; border: 1px solid #222; border-right: 0; border-radius: 4px 0 0 4px; background: #4d4d4d; padding-left: 5px; display: flex; align-items: center; }
.desktop { height: 3px; background: linear-gradient(90deg, #16244a, #12225f 35%, #10194a 60%, #1b2138); flex: none; }
</style>
